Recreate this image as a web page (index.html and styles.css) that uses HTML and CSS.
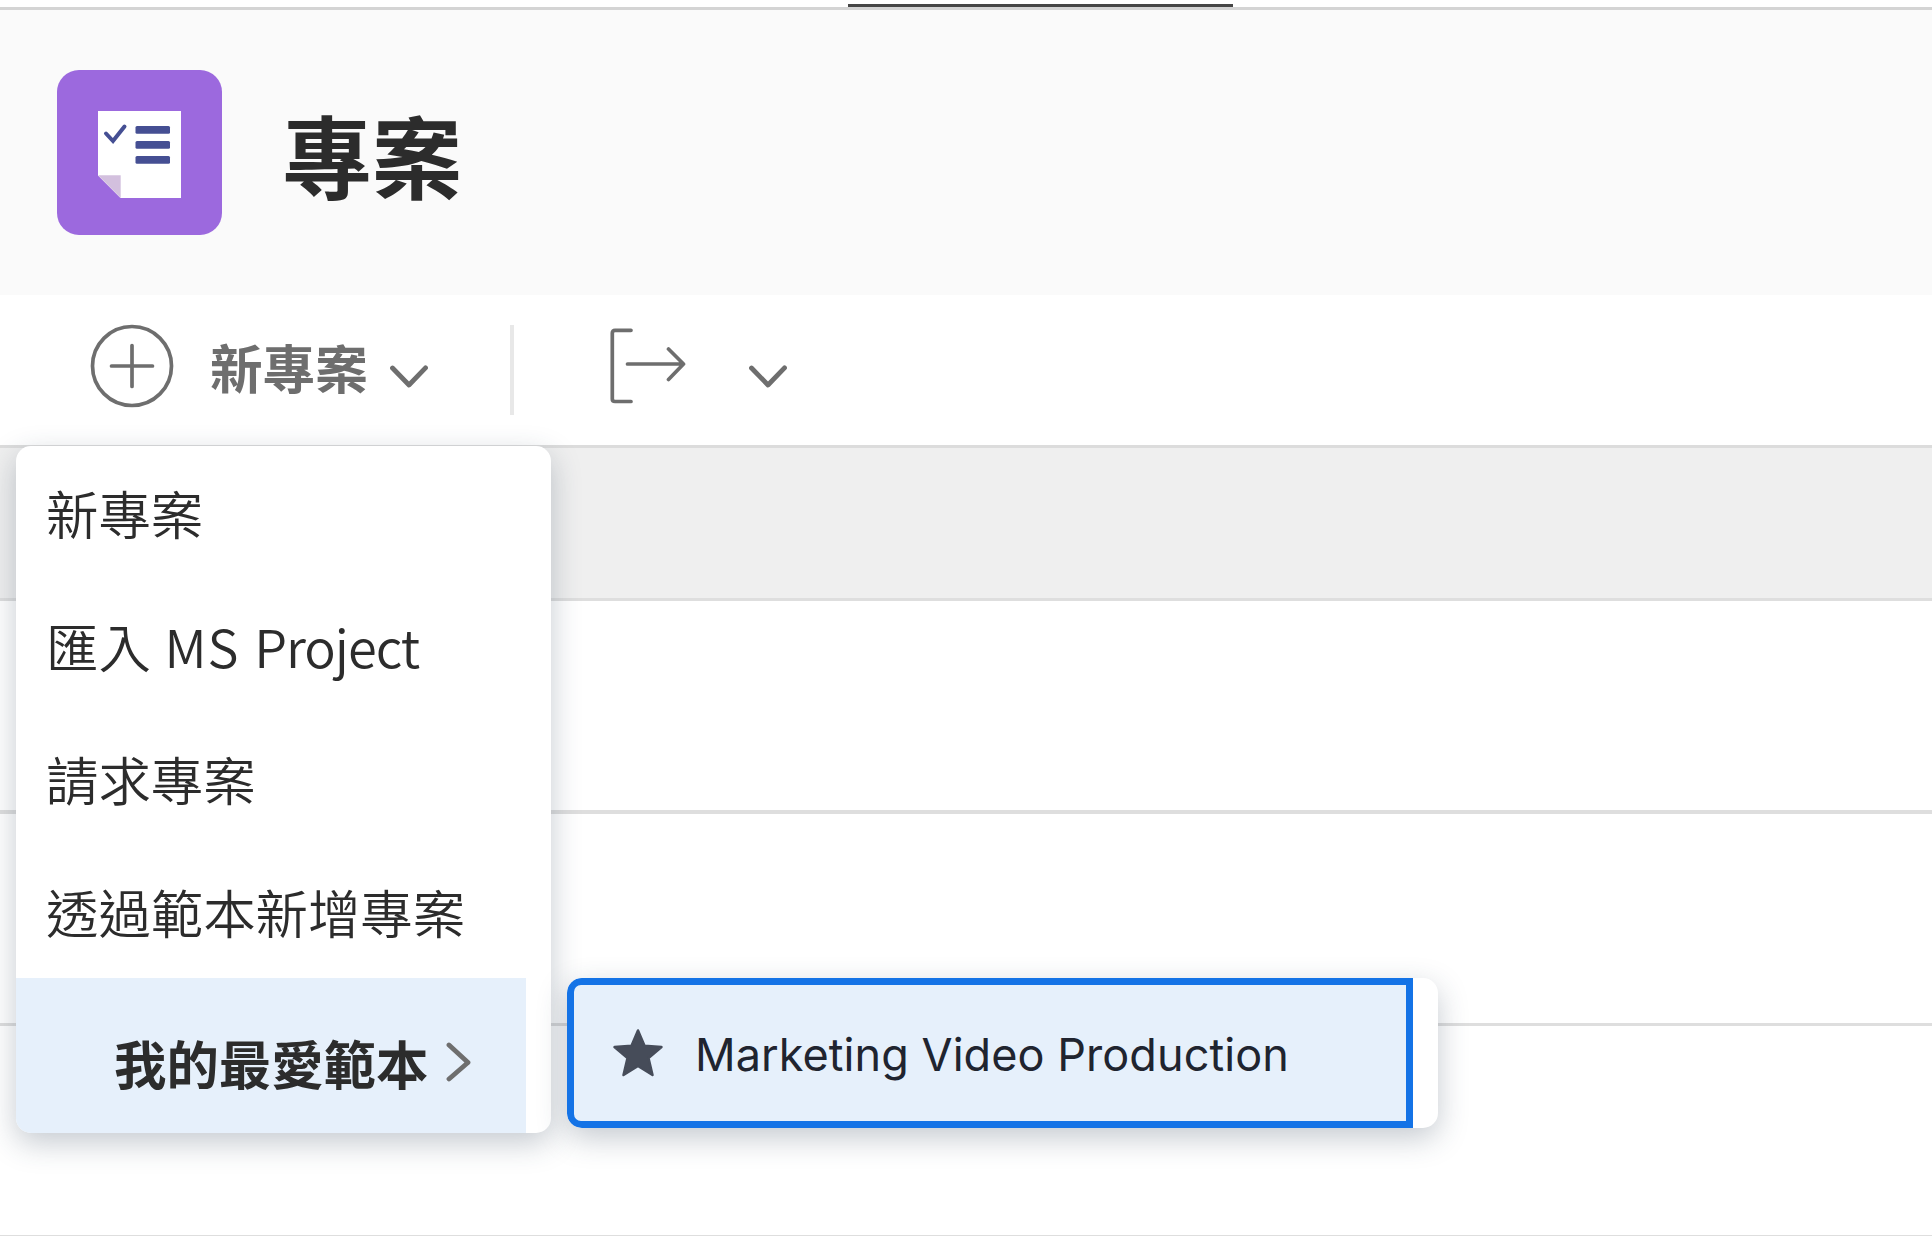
FILE: index.html
```html
<!DOCTYPE html>
<html lang="zh-Hant">
<head>
<meta charset="utf-8">
<title>專案</title>
<link rel="stylesheet" href="styles.css">
</head>
<body>
<div class="tabs"><span class="tab-active"></span></div>
<header class="header">
  <svg class="app-icon" width="165" height="165" viewBox="0 0 165 165">
    <rect width="165" height="165" rx="22" fill="#9c69de"/>
    <path d="M41 41h83v87H63.500L41 105.500z" fill="#fff"/>
    <path d="M41 105.300h22.700V128z" fill="#d3c0de"/>
    <path d="M49 63.500l7 7.500L67.500 56.500" fill="none" stroke="#454f93" stroke-width="4" stroke-linecap="round"/>
    <g fill="#454f93"><rect x="78.500" y="56" width="34.500" height="7.700" rx="1.500"/><rect x="78.500" y="71" width="34.500" height="7.700" rx="1.500"/><rect x="78.500" y="86" width="34.500" height="7.700" rx="1.500"/></g>
  </svg>
  <h1 class="title">專案</h1>
</header>
<nav class="toolbar">
  <svg class="add-icon" width="84" height="84" viewBox="0 0 84 84" fill="none" stroke="#6e6e6e" stroke-width="3.700" stroke-linecap="round"><circle cx="42" cy="42" r="39.500"/><path d="M42 21.500v41M21.500 42h41"/></svg>
  <span class="new-label">新專案</span>
  <svg class="caret" width="38" height="24" viewBox="0 0 38 24"><path d="M2.500 3L19 20 35.500 2.800" fill="none" stroke="#6e6e6e" stroke-width="4.800" stroke-linecap="round" stroke-linejoin="round"/></svg>
  <span class="divider"></span>
  <svg class="export-icon" width="76" height="76" viewBox="0 0 76 76" fill="none" stroke="#6e6e6e" stroke-width="3.700" stroke-linecap="round" stroke-linejoin="round"><path d="M21 2.300H5Q2.300 2.300 2.300 5v66Q2.300 73.500 5 73.500H21M17.500 36H73M58.500 21L73.500 36 58.500 51.500"/></svg>
  <svg class="caret export-caret" width="38" height="24" viewBox="0 0 38 24"><path d="M2.500 3L19 20 35.500 2.800" fill="none" stroke="#6e6e6e" stroke-width="4.800" stroke-linecap="round" stroke-linejoin="round"/></svg>
</nav>
<main class="table">
  <div class="row row-head"></div>
  <div class="row row-first"></div>
  <div class="row row-second"></div>
  <div class="row row-last"></div>
</main>
<div class="menu">
  <div class="menu-item">新專案</div>
  <div class="menu-item">匯入 <span class="product-vendor">MS</span> <span class="product-name">Project</span></div>
  <div class="menu-item">請求專案</div>
  <div class="menu-item">透過範本新增專案</div>
  <div class="menu-item-active">
    <span>我的最愛範本</span>
    <svg class="chevron" width="25" height="40" viewBox="0 0 25 40"><path d="M3 3L22 20.500 3 37" fill="none" stroke="#6e6e6e" stroke-width="4.800" stroke-linecap="round" stroke-linejoin="round"/></svg>
  </div>
</div>
<div class="submenu">
  <div class="template">
    <svg class="star" width="52" height="50" viewBox="0 0 52 50"><path d="M26 2.500L32.500 17.800 49.500 19 36.500 30 40.500 47 26 38 11.500 47 15.500 30 2.500 19 19.500 17.800z" fill="#464c59" stroke="#464c59" stroke-width="2.500" stroke-linejoin="round"/></svg>
    <span class="template-name">Marketing Video Production</span>
  </div>
</div>
</body>
</html>
```
FILE: styles.css
```css
* { box-sizing: border-box; }
body {
  margin: 0;
  width: 1932px;
  height: 1236px;
  overflow: hidden;
  position: relative;
  background: #fff;
  color: #2c2c2c;
  font-family: "Noto Sans CJK TC", sans-serif;
}
svg { display: block; flex: none; }
.tabs { height: 10px; padding: 4px 0 0 848px; border-bottom: 3px solid #d4d4d4; }
.tab-active { display: block; width: 385px; height: 3px; background: #464646; }
.header {
  height: 285px;
  padding: 60px 0 0 57px;
  display: flex;
  align-items: flex-start;
  gap: 60px;
  background: #fafafa;
}
.title { margin: 0; padding-top: 18px; font-size: 90px; line-height: 130px; font-weight: 700; }
.toolbar { height: 153px; padding: 29px 0 0 90px; display: flex; align-items: flex-start; border-bottom: 3px solid #dcdcdc; }
.new-label { margin: 4px 0 0 36px; font-size: 52.6px; line-height: 76px; font-weight: 700; color: #6e6e6e; }
.caret { margin: 41px 0 0 22px; }
.divider { width: 4px; height: 90px; margin: 1px 0 0 82px; background: #e8e8e8; }
.export-icon { margin: 4px 0 0 96px; }
.export-caret { margin-left: 63px; }
.row { border-bottom: 3px solid #dedede; }
.row-head { height: 153px; background: #efefef; }
.row-first { height: 213px; border-bottom-width: 4px; }
.row-second { height: 212px; }
.row-last { height: 210px; border-bottom-width: 1px; }
.menu, .submenu {
  position: absolute;
  background: #fff;
  border-radius: 15px;
  overflow: hidden;
  box-shadow: 0 10px 30px rgba(40, 60, 80, .27);
}
.menu { left: 16px; top: 446px; width: 535px; height: 687px; }
.menu-item { height: 133px; padding: 28px 0 0 30px; font-size: 52.4px; line-height: 76px; font-weight: 350; white-space: nowrap; }
.product-vendor { margin-left: 2px; letter-spacing: 1px; }
.product-name { margin-left: 3px; letter-spacing: -1px; }
.menu-item-active {
  width: 510px;
  height: 155px;
  padding: 46px 0 0 98px;
  display: flex;
  align-items: flex-start;
  font-size: 52.4px;
  line-height: 76px;
  font-weight: 700;
  background: #e6f0fb;
}
.chevron { margin: 18px 0 0 18px; }
.submenu { left: 567px; top: 978px; width: 871px; height: 150px; }
.template {
  width: 846px;
  height: 150px;
  padding: 43px 0 0 38px;
  display: flex;
  align-items: flex-start;
  border: 7px solid #1473e6;
  border-radius: 14px 0 0 14px;
  background: #e6f0fb;
}
.template-name { margin: -3px 0 0 31px; font: 400 45px/60px Inter, sans-serif; letter-spacing: .06px; color: #20242f; white-space: nowrap; }
```
